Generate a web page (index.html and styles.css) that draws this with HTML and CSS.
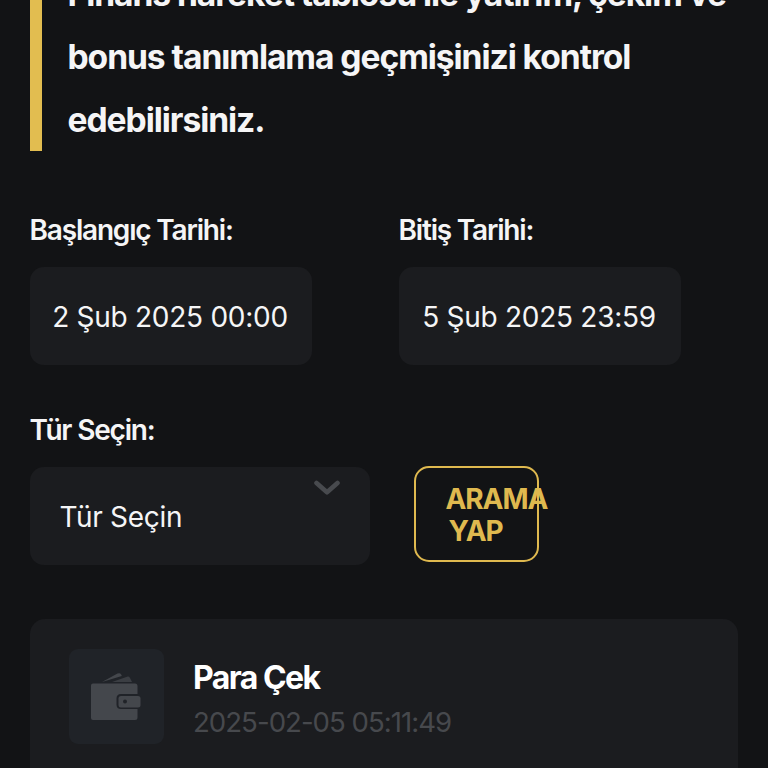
FILE: index.html
```
<!DOCTYPE html>
<html lang="tr">
<head>
<meta charset="utf-8">
<title>Finans Hareketleri</title>
<link rel="stylesheet" href="styles.css">
</head>
<body>
<main class="page">
  <p class="notice">Finans hareket tablosu ile yatırım, çekim ve<br>bonus tanımlama geçmişinizi kontrol<br>edebilirsiniz.</p>
  <form class="filters">
    <div class="field">
      <label class="label">Başlangıç Tarihi:</label>
      <div class="control date"><span class="t-start">2 Şub 2025 00:00</span></div>
    </div>
    <div class="field">
      <label class="label">Bitiş Tarihi:</label>
      <div class="control date"><span class="t-end">5 Şub 2025 23:59</span></div>
    </div>
    <div class="field">
      <label class="label label-type">Tür Seçin:</label>
      <div class="control select">
        <span class="t-type">Tür Seçin</span>
        <svg class="chevron" viewBox="0 0 28 18" width="28" height="18"><path d="M3.500 3 L14 12.300 L24.500 3" fill="none" stroke="#484a4e" stroke-width="4.600" stroke-linecap="round" stroke-linejoin="round"/></svg>
      </div>
    </div>
    <button type="button" class="search"><span class="s1">ARAMA</span><span class="s2">YAP</span></button>
  </form>
  <section class="card">
    <div class="icon">
      <svg viewBox="0 0 52 50" width="52" height="50">
        <path d="M12 10 L27.500 1.600 Q30 0.500 31.300 2.700 L31.800 4 Z" fill="#44474c"/>
        <path d="M22 10 L37 4.700 Q39 4.100 40 6 L42 10 Z" fill="#3b3e43"/>
        <path d="M3 11.500 H45 Q47.500 11.500 47.500 14 V22 H31 Q26.500 22 26.500 26.500 V32.500 Q26.500 37 31 37 H47.500 V45.500 Q47.500 48 45 48 H3 Q1 48 1 46 V13.500 Q1 11.500 3 11.500 Z" fill="#44474c"/>
        <path d="M31 24 H48 Q50.500 24 50.500 26.500 V33 Q50.500 35.500 48 35.500 H31 Q28.500 35.500 28.500 33 V26.500 Q28.500 24 31 24 Z" fill="#44474c"/>
        <circle cx="35" cy="29.500" r="2" fill="#202328"/>
      </svg>
    </div>
    <div class="info">
      <div class="title"><span>Para Çek</span></div>
      <div class="time"><span>2025-02-05 05:11:49</span></div>
    </div>
  </section>
</main>
</body>
</html>
```
FILE: styles.css
```
* { box-sizing: border-box; }
html, body { margin: 0; height: 768px; overflow: hidden; }
body { background: #121315; color: #f5f5f6; font-family: Inter, sans-serif; font-size: 28px; }
.page { height: 768px; overflow: hidden; padding: 0 30px 0 29.5px; display: flow-root; }
.notice {
  margin: -38px -20px 0 0; padding: 0 0 0 26px; border-left: 12px solid #e2bd50;
  font-size: 33.6px; line-height: 63px; font-weight: 650; letter-spacing: -1.05px; white-space: nowrap;
}
.filters { display: grid; grid-template-columns: 340px 340px; column-gap: 29px; row-gap: 48px; margin-top: 62px; }
.label { display: block; height: 34px; line-height: 34px; margin-bottom: 20px; font-weight: 600; letter-spacing: -1.18px; white-space: nowrap; }
.control { height: 98px; border-radius: 14px; background: #1b1c1f; display: flex; align-items: center; white-space: nowrap; letter-spacing: -0.27px; }
.date { width: 282px; justify-content: center; padding: 1px 1px 0 0; }
.select { padding: 1px 29px 0 30px; justify-content: space-between; }
.chevron { align-self: flex-start; margin-top: 12px; }
.search {
  align-self: end; margin: 0 0 3px 15px; width: 125px; height: 96px; padding: 1px 0 0 30px;
  border: 2px solid #dfb94f; border-radius: 15px; background: none; color: #dfb94f;
  font: 700 28px/32px Inter, sans-serif; letter-spacing: -1.1px; text-align: left;
  display: flex; flex-direction: column; justify-content: center;
}
.s2 { padding-left: 3px; }
.card { display: flex; margin-top: 54px; height: 200px; border-radius: 15px; background: #1b1c1f; padding: 30px 39px; }
.icon { width: 95px; height: 95px; border-radius: 9px; background: #202328; display: flex; align-items: center; justify-content: center; flex: none; }
.info { margin-left: 29.500px; padding-top: 9px; white-space: nowrap; }
.title { font-size: 32px; line-height: 40px; font-weight: 650; letter-spacing: -1.55px; color: #fff; }
.time { font-size: 27.6px; line-height: 34px; margin-top: 7px; color: #47494d; letter-spacing: -0.98px; }
```
